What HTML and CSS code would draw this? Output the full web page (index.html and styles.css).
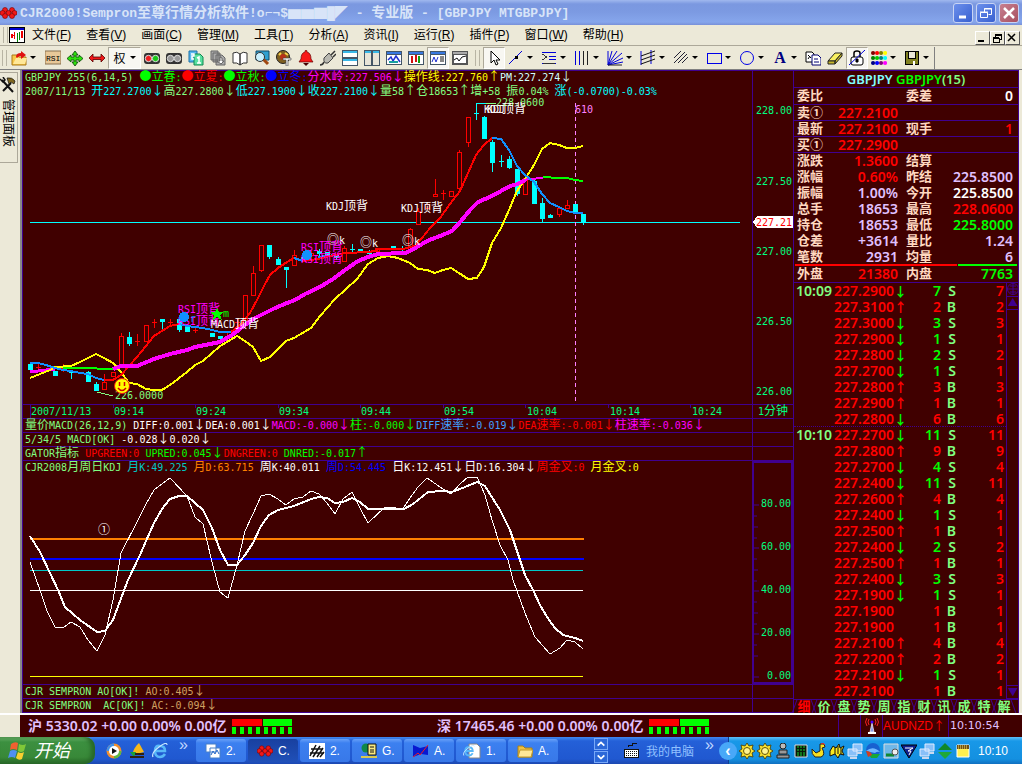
FILE: index.html
```html
<!DOCTYPE html>
<html lang="zh-CN">
<head>
    <meta charset="UTF-8">
    <meta name="viewport" content="width=device-width, initial-scale=1.0">
    <title>CJR2000 - GBPJPY</title>
    <link rel="stylesheet" href="styles.css">
</head>
<body>

    <!-- Title bar -->
    <header class="titlebar">
        <svg class="logo" width="17" height="16"><use href="#i-logo"/></svg>
        <h1>CJR2000!Sempron<i>至尊行情分析软件</i>!o⌐¬$▆▆▇█◤ - <i>专业版</i> - [GBPJPY MTGBPJPY]</h1>
        <div class="win-buttons">
            <button aria-label="Minimize"><svg width="18" height="18"><path d="M5 13h7" stroke="#fff" stroke-width="3"/></svg></button>
            <button aria-label="Restore"><svg width="18" height="18" fill="none" stroke="#fff"><path d="M7.500 8V4.500h7v6h-3M7 5h8" /><path d="M3.500 8.500h7v5h-7zM3 8h8"/></svg></button>
            <button class="close" aria-label="Close"><svg width="18" height="18"><path d="M4 4l10 10M14 4L4 14" stroke="#fff" stroke-width="2.500"/></svg></button>
        </div>
    </header>

    <!-- Menu -->
    <nav class="menubar">
        <span class="grip"></span>
        <svg class="mdi-icon" width="16" height="16" shape-rendering="crispEdges"><path d="M0 0h16v16H0z" fill="#000"/><path d="M1 3h14v12H1z" fill="#fff"/><path d="M1 1h14v2H1z" fill="#00c"/><path d="M2 7h2v4H2zM5 5h1v7H5zM12 4h2v7h-2zM3 8h3v1H3z" fill="#e00"/><path d="M8 6h1v9H8zM10 5h1v8h-1z" fill="#080"/></svg>
        <button>文件(<u>F</u>)</button>
        <button>查看(<u>V</u>)</button>
        <button>画面(<u>C</u>)</button>
        <button>管理(<u>M</u>)</button>
        <button>工具(<u>T</u>)</button>
        <button>分析(<u>A</u>)</button>
        <button>资讯(<u>I</u>)</button>
        <button>运行(<u>R</u>)</button>
        <button>插件(<u>P</u>)</button>
        <button>窗口(<u>W</u>)</button>
        <button>帮助(<u>H</u>)</button>
        <div class="mdi-buttons">
            <button aria-label="Minimize chart"><svg width="12" height="10"><path d="M2 8h6" stroke="#000" stroke-width="2"/></svg></button>
            <button aria-label="Restore chart"><svg width="12" height="10" fill="none" stroke="#000" shape-rendering="crispEdges"><path d="M4 4V1h6v5H8M4 2h6M2 5h6v4H2zM2 4h6"/></svg></button>
            <button aria-label="Close chart"><svg width="12" height="10"><path d="M2 1l7 7M9 1L2 8" stroke="#000" stroke-width="1.500"/></svg></button>
        </div>
    </nav>

    <!-- Toolbars -->
    <div class="toolbar">
        <span class="grip"></span>
        <button class="tool" aria-label="Open"><svg><path d="M1 5h5l2 2h7v8H1z" fill="#f8c848" stroke="#a87818"/><path d="M2 14l3-6h11l-2 6z" fill="#ffe898"/><path d="M5 7q0-4 5-4V1l5 4-5 4V6q-3 0-4 2z" fill="#e01010"/></svg></button>
        <button class="drop wide" aria-label="Open options"></button>
        <button class="tool" aria-label="RSI"><svg><path d="M0 1h16v13H0z" fill="#e8c898" stroke="#887050"/><text x="1" y="11" class="rsi">RSI</text></svg></button>
        <button class="tool" aria-label="Move"><svg><path d="M8 1l3 4H9v2h3V5l4 3.500-4 3.500v-2H9v2h2l-3 4-3-4h2v-2H4v2L0 8.500 4 5v2h3V5H5z" fill="#30e010" stroke="#084008" stroke-width=".8"/></svg></button>
        <button class="tool" aria-label="Width"><svg><path d="M0 8l4-4v3h8V4l4 4-4 4V9.500H4V12z" fill="#f01818" stroke="#500" stroke-width=".8"/></svg></button>
        <button class="rights on">权<span></span></button>
        <button class="tool" aria-label="Compare on"><svg><rect x="0" y="3" width="16" height="11" rx="3" fill="#333"/><circle cx="4.500" cy="8.500" r="3.200" fill="#f02020" stroke="#ddd"/><circle cx="11.500" cy="8.500" r="3.200" fill="#18c818" stroke="#ddd"/></svg></button>
        <button class="tool" aria-label="Compare off"><svg><rect x="0" y="3" width="16" height="11" rx="3" fill="#333"/><circle cx="4.500" cy="8.500" r="3.200" fill="#999" stroke="#ddd"/><circle cx="11.500" cy="8.500" r="3.200" fill="#999" stroke="#ddd"/></svg></button>
        <button class="tool" aria-label="Pages"><svg><path d="M1 1h8v11H1z" fill="#58b8f0" stroke="#1870a8"/><path d="M6 4h6l3 3v8H6z" fill="#58e0a0" stroke="#108850"/><path d="M3 4h3v2H4v3h2M9 8l2-1v6M9 13h4" fill="none" stroke="#fff" stroke-width="1.500"/></svg></button>
        <button class="tool" aria-label="Copy pages"><svg fill="#aaa" stroke="#666"><path d="M1 1h7v9H1zM3 3h7v9H3zM6 5h6l3 3v7H6z"/><path d="M10 7v4H7l4 3 3-3h-2V8z" fill="#fff"/></svg></button>
        <button class="tool" aria-label="Book"><svg><path d="M1 3q4-2 7 1 3-3 7-1v10q-4-1-7 2-3-3-7-2z" fill="#fff" stroke="#333"/><path d="M8 4v11" stroke="#333" stroke-width="1.500"/></svg></button>
        <button class="tool" aria-label="Find"><svg><path d="M2 1h13v9H2z" fill="#30a0d0" stroke="#104868"/><path d="M9 9l5 5" stroke="#a04810" stroke-width="3"/><circle cx="6" cy="7" r="4.500" fill="#c8f0ff" stroke="#333"/></svg></button>
        <button class="tool" aria-label="Build"><svg><circle cx="7" cy="7" r="6.500" fill="#806020" stroke="#222"/><circle cx="7" cy="7" r="3" fill="#b83018"/><path d="M3 5l2-2M9 3l3 2" stroke="#f8d048" stroke-width="2"/><path d="M7 8h8v2h-3v6h-2v-6H7z" fill="#eee" stroke="#444" stroke-width=".6"/></svg></button>
        <button class="tool" aria-label="Alarm"><svg><path d="M8 0q1 0 1 2 4 1 4 7l2 3H1l2-3q0-6 4-7 0-2 1-2z" fill="#f81818" stroke="#600" stroke-width=".7"/><path d="M5 13h6l-3 3z" fill="#400"/></svg></button>
        <button class="tool" aria-label="Connect"><svg><path d="M0 15q3 0 4-3M11 5l4-4M13 7l3-3" fill="none" stroke="#333" stroke-width="1.500"/><path d="M4 8l5-5 4 5-5 5q-5 1-4-5z" fill="#b8b8b0" stroke="#444"/></svg></button>
        <button class="tool" aria-label="Tile rows"><svg shape-rendering="crispEdges"><path d="M0 0h16v16H0z" fill="#456"/><path d="M1 3h14v4H1zM1 11h14v4H1z" fill="#fff"/><path d="M1 1h14v2H1zM1 9h14v2H1z" fill="#38b8e8"/></svg></button>
        <button class="tool" aria-label="Tile columns"><svg shape-rendering="crispEdges"><path d="M0 0h16v16H0z" fill="#456"/><path d="M1 3h6v12H1zM9 3h6v12H9z" fill="#e8e4d8"/><path d="M1 1h6v2H1zM9 1h6v2H9z" fill="#38b8e8"/></svg></button>
        <button class="tool" aria-label="Trend window"><svg><use href="#i-win"/><path d="M2 10l3-3 2 4 3-5 4 6" fill="none" stroke="#2030d0" stroke-width="1.500"/><path d="M3 12h9" stroke="#18a0a0" stroke-width="2"/></svg></button>
        <button class="tool" aria-label="Candle window"><svg><use href="#i-win"/><path d="M4 6v7M8 5v7" stroke="#d01010" stroke-width="2"/><path d="M11 6v7" stroke="#10a010" stroke-width="2"/></svg></button>
        <button class="tool on" aria-label="Quote window"><svg><use href="#i-win"/><path d="M2 12l2-5 2 5 2-5" fill="none" stroke="#2030d0"/><path d="M10 7h4M10 9h4M10 11h4" stroke="#111"/></svg></button>
        <button class="tool" aria-label="Line window"><svg><path d="M0 1h16v14H0z" fill="#555"/><path d="M1 2h14v2H1z" fill="#aaa"/><path d="M2 5h12v8H2z" fill="#fff"/><path d="M2 10l3-2 2 3 3-4 4-1" fill="none" stroke="#111"/></svg></button>

        <span class="grip second"></span>
        <button class="tool on" aria-label="Select"><svg><path d="M5 1v12l3-3 2 5 2-1-2-4h4z" fill="#fff" stroke="#000"/></svg></button>
        <button class="tool" aria-label="Line"><svg><path d="M1 14L14 1" stroke="#0000d8"/><path d="M7 6h3v3H7z" fill="#000"/></svg></button>
        <button class="drop" aria-label="Line options"></button>
        <button class="tool" aria-label="Levels"><svg shape-rendering="crispEdges"><path d="M1 2h14M8 6h7M8 9h7M1 13h14" stroke="#0000d8"/><path d="M1 4l5 3-5 3M2 13h12" fill="none" stroke="#333"/></svg></button>
        <button class="drop" aria-label="Level options"></button>
        <button class="tool" aria-label="Periods"><svg shape-rendering="crispEdges"><path d="M1 1v14M5 1v14" stroke="#0000d8"/><path d="M9 1v14M13 1v14" stroke="#222"/></svg></button>
        <button class="drop" aria-label="Period options"></button>
        <button class="tool" aria-label="Fan"><svg fill="none" stroke="#0000d8"><path d="M1 1v14M1 15L5 1M1 15L10 1M1 15L15 3M1 15l15-7M1 15l15-3"/><path d="M1 15h14" stroke="#222"/></svg></button>
        <button class="drop" aria-label="Fan options"></button>
        <button class="tool" aria-label="Channel"><svg fill="none" stroke="#111"><path d="M1 1v14M11 0v14" stroke="#0000d8"/><path d="M1 6l14-5M1 10l14-5M1 14l14-5"/></svg></button>
        <button class="drop" aria-label="Channel options"></button>
        <button class="tool" aria-label="Hatch"><svg fill="none" stroke="#223"><path d="M1 8l7-7M1 13L12 2M5 13l9-9M9 13l6-6"/></svg></button>
        <button class="drop" aria-label="Hatch options"></button>
        <button class="tool" aria-label="Rectangle"><svg shape-rendering="crispEdges"><path d="M1 3h14v10H1z" fill="none" stroke="#0000e8"/></svg></button>
        <button class="drop" aria-label="Rectangle options"></button>
        <button class="tool" aria-label="Ellipse"><svg><circle cx="8" cy="8" r="6.500" fill="none" stroke="#0000e8"/></svg></button>
        <button class="drop" aria-label="Ellipse options"></button>
        <button class="tool letter">A</button>
        <button class="drop" aria-label="Text options"></button>
        <button class="tool" aria-label="Duplicate"><svg fill="#fff" stroke="#000"><path d="M1 2h6l2 2v8H1z"/><path d="M3 5l3 3M3 9l2-3" fill="none"/><g stroke="#000070"><path d="M7 5h6l3 3v7H7z"/><path d="M9 9h4M9 12h5" /></g></svg></button>
        <button class="tool" aria-label="Erase"><svg><path d="M1 11l7-8h7l-7 8z" fill="#f8f060" stroke="#222"/><path d="M1 11h7v3H1zM8 11l7-8v3l-7 8z" fill="#c8b828" stroke="#222"/></svg></button>
        <button class="tool on" aria-label="Lock"><svg fill="none" stroke="#000"><path d="M5 7V3q0-2 3-2t3 2v4" stroke-width="1.500"/><rect x="2" y="7" width="12" height="8" rx="2" fill="#fff"/><path d="M7 9h2v3H7z" fill="#000"/><path d="M0 15L16 0" stroke="#0000d8"/></svg></button>
        <button class="tool" aria-label="Colours"><svg><g stroke-width="4" stroke-linecap="round"><path d="M2 3h.1" stroke="#800000"/><path d="M6 3h.1" stroke="#f00"/><path d="M10 3h.1" stroke="#808000"/><path d="M14 3h.1" stroke="#ff0"/><path d="M2 8h.1" stroke="#008000"/><path d="M6 8h.1" stroke="#0c0"/><path d="M10 8h.1" stroke="#008080"/><path d="M14 8h.1" stroke="#0ff"/><path d="M2 13h.1" stroke="#000080"/><path d="M6 13h.1" stroke="#00f"/><path d="M10 13h.1" stroke="#800080"/><path d="M14 13h.1" stroke="#f0f"/></g></svg></button>
        <button class="drop" aria-label="Colour options"></button>
        <button class="tool" aria-label="Save"><svg shape-rendering="crispEdges"><path d="M1 1h14v14H1z" fill="#000"/><path d="M2 2h2v7h8V2h2v12H2z" fill="#808020"/><path d="M5 2h6v6H5z" fill="#ece9d8"/><path d="M9 11h2v4H9z" fill="#fff"/></svg></button>
        <button class="drop" aria-label="Save options"></button>
        <span class="bar-end"></span>
    </div>

    <main class="desk">
        <aside class="dock">
            <button>
                <svg width="16" height="16"><path d="M2 3l11 12M3 14L11 6" stroke="#111" stroke-width="2"/><path d="M7 1q5-1 8 3l-1 3-3-2-2 2z" fill="#806820" stroke="#111" stroke-width=".7"/><path d="M0 2l3 3 2-2-2-3" fill="none" stroke="#111" stroke-width="1.500"/></svg>
                <span>管理面板</span>
            </button>
        </aside>

        <section class="charts">
            <!-- Price -->
            <div class="panel price">
                <div class="plot">
                    <p class="read"><span class="g">GBPJPY</span> <span class="g">255(6,14,5)</span> <i class="lime">●立春</i><span class="lime">:</span><i class="red">●立夏</i><span class="red">:</span><i class="lime">●立秋</i><span class="lime">:</span><i class="blue">●立冬</i><span class="blue">:</span><span class="mag"><i>分水岭</i>:227.506<i>↓</i></span><span class="yel"><i>操作线</i>:227.760<i>↑</i></span><span class="pale">PM:227.274<i>↓</i></span></p>
                    <p class="read"><span class="g">2007/11/13</span> <span class="cyan"><i>开</i>227.2700<i>↓</i></span><span class="g"><i>高</i>227.2800<i>↓</i></span><span class="cyan"><i>低</i>227.1900<i>↓</i><i>收</i>227.2100<i>↓</i></span><span class="g"><i>量</i>58<i>↑仓</i>18653<i>↑增</i>+58 <i>振</i>0.04%</span> <span class="cyan"><i>涨</i>(-0.0700)-0.03%</span></p>
                    <svg class="canvas" height="305" shape-rendering="crispEdges">
                        <g transform="translate(-23 -99)" fill="none">
                            <path d="M30 222.500H740" stroke="#0ff"/>
                            <path d="M575.500 103V402" stroke="#ff80ff" stroke-dasharray="4 3"/>
                            <g id="candles"></g>
                            <g stroke-width="2">
                                <path stroke="#0f0" d="M63 368L80 368 113 369"/>
                                <path stroke="#f0f" stroke-width="3" d="M30 372L46 370 55 369"/>
                                <path stroke="#ff0" d="M30 378L50 370 55 367 71 366 80 362 88 358 96 354 104 358 113 363 121 372 129 383 137 384 146 389 154 390 162 390 170 385 187 372 195 365 203 361 220 346 237 336 245 341 253 347 261 361 270 357 286 341 294 338 311 328 320 316 335 299 357 279 368 264 378 258 388 256 398 258 410 263 418 269 427 270 435 273 443 270 451 268 459 273 468 279 477 278 484 267 492 243 501 228 509 210 517 191 525 179 534 165 542 149 550 143 559 145 567 148 575 148 583 146"/>
                                <path stroke="#1090ff" d="M30 363L38 363 46 365 55 368 63 370 71 371 80 373 88 374 96 378 104 380"/>
                                <path stroke="#f00" d="M104 380L113 380 121 375 129 366 137 357 146 346 154 336 162 331 170 326 179 324"/>
                                <path stroke="#1090ff" d="M179 324L187 326 203 328 212 330 220 332 233 332"/>
                                <path stroke="#f00" d="M231 332L240 325 250 313 258 298 265 284 270 275 278 268 287 262 294 258"/>
                                <path stroke="#1090ff" d="M294 258L303 261M318 257L336 255"/>
                                <path stroke="#f00" d="M303 261L318 259 330 256 345 253 370 252 380 249 403 249 415 246 422 238 430 228 440 218 450 204 460 191 468 173 476 155 484 145 492 138"/>
                                <path stroke="#f0f" stroke-width="4" d="M113 369L121 366 137 366 154 359 170 354 187 350 195 347 220 342 232 335 245 325 255 318 275 308 287 303 295 300 305 294 320 287 333 279 345 270 358 261 368 257 378 254 405 253 412 250 427 241 440 236 452 231 461 221 470 210 478 202 492 196 510 186 518 184 525 180"/>
                                <path stroke="#f0f" d="M523 180L530 179 543 178"/>
                                <path stroke="#0f0" d="M543 177L558 178 567 178 575 180 583 181"/>
                                <path stroke="#1090ff" d="M492 138L501 139 509 150 517 166 525 175 534 182 542 194 550 203 559 207 567 211 575 213 583 213"/>
                            </g>
                            <path d="M476.500 113V103.500H486" stroke="#0ff"/>
                            <path d="M486 103.500H496M97 392L113 396" stroke="#80ff80"/>
                            <g class="marks">
                                <text x="496" y="106" fill="#80ff80">228.0600</text>
                                <text x="484" y="113">KDJ<tspan class="full">顶背</tspan></text>
                                <text x="487" y="113">KDJ</text>
                                <text x="575" y="113" fill="#ff80ff">610</text>
                                <text x="326" y="210">KDJ<tspan class="full">顶背</tspan></text>
                                <text x="401" y="212">KDJ<tspan class="full">顶背</tspan></text>
                                <text x="327" y="244"><tspan class="full">◎</tspan>k</text>
                                <text x="360" y="247"><tspan class="full">◎</tspan>k</text>
                                <text x="402" y="245"><tspan class="full">◎</tspan>k</text>
                                <text x="301" y="251" fill="#f0f">RSI<tspan class="full">顶背</tspan></text>
                                <text x="301" y="263" fill="#f0f">RSI<tspan class="full">顶背</tspan></text>
                                <text x="178" y="313" fill="#f0f">RSI<tspan class="full">顶背</tspan></text>
                                <text x="178" y="325" fill="#f0f">RSI<tspan class="full">顶背</tspan></text>
                                <text x="190" y="322" fill="#1090ff">r</text>
                                <text x="211" y="328">MACD<tspan class="full">顶背</tspan></text>
                                <text x="223" y="317" fill="#0f0">m</text>
                                <text x="115" y="399" fill="#80ff80">226.0000</text>
                            </g>
                            <circle cx="307" cy="255" r="5" fill="#1090ff"/>
                            <circle cx="184" cy="317" r="5" fill="#1090ff"/>
                            <path d="M217 308l2 4h5l-4 3 2 5-5-3-4 3 1-5-4-3h5z" fill="#0f0"/>
                            <g shape-rendering="auto">
                                <circle cx="122" cy="386" r="7.500" fill="#ff0" stroke="#f01010"/>
                                <path d="M119.500 382v4M124.500 382v4M118 388q4 5 8 0" stroke="#d00000" stroke-width="1.500"/>
                            </g>
                        </g>
                    </svg>
                </div>
                <svg class="scale marks" shape-rendering="crispEdges">
                    <g fill="#00ff80"><text x="3" y="43">228.00</text><text x="3" y="114">227.50</text><text x="3" y="184">227.00</text><text x="3" y="254">226.50</text><text x="3" y="324">226.00</text></g>
                    <path d="M0 151l4-6h36v12H4z" fill="#fff"/>
                    <text x="3" y="155" fill="#f00">227.21</text>
                </svg>
            </div>
            <div class="panel">
                <svg class="plot times marks" height="13" fill="#00ff80">
                    <text x="8" y="10">2007/11/13</text><text x="91" y="10">09:14</text><text x="173" y="10">09:24</text><text x="256" y="10">09:34</text><text x="338" y="10">09:44</text><text x="421" y="10">09:54</text><text x="504" y="10">10:04</text><text x="587" y="10">10:14</text><text x="669" y="10">10:24</text>
                    <path d="M7.500 0v13M90.500 0v3M172.500 0v3M255.500 0v3M337.500 0v3M420.500 0v3M502.500 0v3M585.500 0v3M667.500 0v3" stroke="#400090"/>
                </svg>
                <p class="scale read period">1<i>分钟</i></p>
            </div>

            <!-- Indicators -->
            <div class="panel">
                <p class="plot read"><span class="g"><i>量价</i>MACD(26,12,9)</span> DIFF:0.001<i>↓</i>DEA:0.001<i>↓</i><span class="mag">MACD:-0.000<i>↓</i></span><span class="lime"><i>柱</i>:-0.000<i>↓</i></span><span class="sky">DIFF<i>速率</i>:-0.019<i>↓</i></span><span class="red">DEA<i>速率</i>:-0.001<i>↓</i></span><span class="mag"><i>柱速率</i>:-0.036<i>↓</i></span></p>
                <div class="scale"></div>
            </div>
            <div class="panel">
                <p class="plot read"><span class="g">5/34/5 MACD[OK]</span> -0.028<i>↓</i>0.020<i>↓</i></p>
                <div class="scale"></div>
            </div>
            <div class="panel">
                <p class="plot read"><span class="g">GATOR<i>指标</i></span> <span class="red">UPGREEN:0</span> <span class="lime">UPRED:0.045<i>↓</i></span><span class="red">DNGREEN:0</span> <span class="lime">DNRED:-0.017<i>↑</i></span></p>
                <div class="scale"></div>
            </div>
            <div class="panel kdj">
                <div class="plot">
                    <p class="read"><span class="g">CJR2008<i>月周日</i>KDJ</span> <span class="teal"><i>月</i>K:49.225</span> <span class="orange"><i>月</i>D:63.715</span> <i>周</i>K:40.011 <span class="blue"><i>周</i>D:54.445</span> <i>日</i>K:12.451<i>↓日</i>D:16.304<i>↓</i><span class="red"><i>周金叉</i>:0</span> <span class="yel"><i>月金叉</i>:0</span></p>
                    <svg class="canvas" height="209" shape-rendering="crispEdges">
                        <g transform="translate(-23 -475)" fill="none">
                            <path d="M30 539H584" stroke="#ff8000" stroke-width="2"/>
                            <path d="M30 559H584" stroke="#00f" stroke-width="2"/>
                            <path d="M30 570.500H583" stroke="#00c8c8"/>
                            <path d="M30 590.500H583" stroke="#fff"/>
                            <path d="M30 676.500H583" stroke="#ff0"/>
                            <path stroke="#fff" d="M30 562L40 590 47 611 55 627 63 628 71 622 80 627 88 640 97 651 105 635 113 600 121 553 137 522 146 504 154 490 170 478 187 496 195 517 203 524 212 562 220 592 228 598 237 565 245 531 253 514 261 496 269 494 278 499 286 505 294 499 303 497 311 491 319 494 327 503 335 514 343 499 352 492 360 508 368 523 385 507 393 507 402 510 410 498 418 487 427 478 443 489 451 494 460 484 468 477 477 477 485 495 492 520 500 545 508 560 513 580 525 613 535 637 550 654 560 648 567 640 575 642 583 649"/>
                            <path stroke="#fff" stroke-width="2" d="M30 536L40 552 50 573 58 590 65 607 80 620 97 632 105 631 113 620 128 580 140 555 146 541 154 523 162 509 170 499 179 496 187 496 195 503 203 510 212 528 220 550 228 565 237 565 245 555 253 543 261 526 269 515 278 510 294 506 311 499 319 497 327 498 335 503 343 502 352 498 360 502 368 509 404 509 413 504 428 492 443 491 452 492 465 487 477 482 485 486 500 510 510 530 517 551 525 575 533 590 540 605 547 617 555 628 563 635 575 638 583 641"/>
                            <g class="marks"><text x="98" y="534"><tspan class="full">①</tspan></text></g>
                        </g>
                    </svg>
                </div>
                <svg class="scale marks" fill="#00ff80">
                    <path d="M0 42h5M0 53h3M0 64h4M0 75h3M0 85h5M0 96h3M0 107h4M0 118h3M0 128h5M0 139h3M0 150h4M0 161h3M0 171h5M0 182h3M0 193h4M0 214h5" stroke="#400090"/>
                    <text x="7" y="44">80.00</text><text x="7" y="87">60.00</text><text x="7" y="130">40.00</text><text x="7" y="173">20.00</text><text x="13" y="216">0.00</text>
                </svg>
            </div>
            <div class="panel">
                <p class="plot read"><span class="g">CJR SEMPRON AO[OK]!</span> <span class="tan">AO:0.405<i>↓</i></span></p>
                <div class="scale"></div>
            </div>
            <div class="panel">
                <p class="plot read"><span class="g">CJR SEMPRON&nbsp; AC[OK]!</span> <span class="tan">AC:-0.094<i>↓</i></span></p>
                <div class="scale"></div>
            </div>
        </section>

        <!-- Quote board -->
        <section class="quote">
            <h2><span class="aqua">GBPJPY</span> <span class="lime">GBPJPY</span>(15)</h2>
            <table class="board">
                <tr class="line"><th>委比</th><td></td><th>委差</th><td class="white">0</td></tr>
                <tr class="line"><th>卖①</th><td class="red">227.2100</td><th></th><td></td></tr>
                <tr class="line"><th>最新</th><td class="red">227.2100</td><th>现手</th><td class="red">1</td></tr>
                <tr class="line"><th>买①</th><td class="red">227.2900</td><th></th><td></td></tr>
                <tr><th>涨跌</th><td class="red">1.3600</td><th>结算</th><td></td></tr>
                <tr><th>涨幅</th><td class="red">0.60%</td><th>昨结</th><td>225.8500</td></tr>
                <tr><th>振幅</th><td>1.00%</td><th>今开</th><td class="white">225.8500</td></tr>
                <tr><th>总手</th><td>18653</td><th>最高</th><td class="red">228.0600</td></tr>
                <tr><th>持仓</th><td>18653</td><th>最低</th><td class="lime">225.8000</td></tr>
                <tr><th>仓差</th><td>+3614</td><th>量比</th><td>1.24</td></tr>
                <tr><th>笔数</th><td>2931</td><th>均量</th><td>6</td></tr>
            </table>
            <div class="ratio"><span style="flex-grow: 21380"></span><span style="flex-grow: 7763"></span></div>
            <table class="board last">
                <tr class="line"><th>外盘</th><td class="red">21380</td><th>内盘</th><td class="lime">7763</td></tr>
            </table>
            <div class="tape">
                <table class="ticks"><tbody id="ticks"></tbody></table>
                <div class="scroll">
                    <svg width="12" height="13" fill="none" stroke="#400090"><circle cx="6" cy="6" r="5.500"/><path d="M6 0v12M0 6h12M3 3h6M3 9h6"/></svg>
                    <button aria-label="Scroll up">▲</button>
                    <button class="down" aria-label="Scroll down">▼</button>
                </div>
            </div>
            <nav class="tabs">
                <button class="active">细</button><button>价</button><button>盘</button><button>势</button><button>周</button><button>指</button><button>财</button><button>讯</button><button>成</button><button>特</button><button>解</button>
            </nav>
        </section>
    </main>

    <!-- Market status -->
    <div class="status">
        <div class="index">沪 5330.02 +0.00 0.00% 0.00亿 <span class="meter"></span></div>
        <div class="index">深 17465.46 +0.00 0.00% 0.00亿 <span class="meter"></span></div>
        <div class="cell"></div>
        <div class="cell"><svg width="14" height="18" fill="none"><path d="M5 15l2-9 2 9z" fill="#8898e8" stroke="#fff" stroke-width=".7"/><path d="M3 16h8" stroke="#fff" stroke-width="2"/><circle cx="7" cy="5" r="1.500" fill="#40f"/><path d="M4 2q-2 3 0 6M10 2q2 3 0 6M2 1q-3 4 0 8M12 1q3 4 0 8" stroke="#f02020"/></svg></div>
        <div class="cell pair">AUDNZD<i>↑</i></div>
        <div class="cell clock">10:10:54</div>
    </div>

    <!-- Taskbar -->
    <footer class="taskbar">
        <button class="start">
            <svg width="20" height="19"><path d="M3 3q4-3 7-1L9 9Q5 7 2 9z" fill="#f06030"/><path d="M11 3q4 2 7 0l-2 7q-3 2-6 0z" fill="#80c838"/><path d="M2 10q3-2 7 0l-2 7q-3-2-7 0z" fill="#5090f0"/><path d="M10 11q3 2 6 0l-2 7q-3 2-6-1z" fill="#f8d030"/></svg>
            开始
        </button>
        <div class="launch">
            <a href="#" aria-label="Media player"><svg><circle cx="8" cy="8" r="7.500" fill="#f09030"/><path d="M8 .5a7.500 7.500 0 0 0-7.500 7.500H8z" fill="#4090e8"/><path d="M8 15.500A7.500 7.500 0 0 0 15.500 8H8z" fill="#60b840"/><circle cx="8" cy="8" r="5" fill="#fff"/><path d="M6 5l5 3-5 3z" fill="#111"/></svg></a>
            <a href="#" aria-label="Sail"><svg><path d="M10 0l5 9-12 3q2-8 7-12z" fill="#f8b818"/><path d="M1 9h6l-2 5z" fill="#18a038"/><path d="M1 14h14M6 11h9" stroke="#302010" stroke-width="2"/></svg></a>
            <a href="#" aria-label="Internet Explorer"><svg><use href="#i-ie"/></svg></a>
        </div>
        <span class="more">»</span>
        <div class="tasks">
            <button><svg><path d="M1 1h10v8H1zM5 5h10v10H5z" fill="#fff" stroke="#4880c8"/><path d="M6 12l2-4 2 3 2-4 2 4" fill="none" stroke="#2868c8"/></svg>2.</button>
            <button class="current"><svg><use href="#i-logo"/></svg>C.</button>
            <button><svg><path d="M0 0h16v16H0z" fill="#fff"/><path d="M1 13L7 2M4 14l7-11M8 14l6-9M2 6h11M1 10h14M11 14l4-5" stroke="#111" stroke-width="1.500"/></svg>2.</button>
            <button><svg><circle cx="5" cy="5" r="4.500" fill="#108848"/><path d="M7 1h8v11H7z" fill="#f8e880" stroke="#111"/><path d="M9 4h4M9 7h4M9 9h4" stroke="#111"/><path d="M0 14h16" stroke="#d8c850" stroke-width="2"/></svg>G.</button>
            <button><svg><path d="M0 2l7 3 8-2v9l-7-1-8 3z" fill="#0818d0"/><path d="M0 14l5-4 2 2 8-10" fill="none" stroke="#f02020"/></svg>A.</button>
            <button><svg><path d="M4 1h8l3 3v11H4z" fill="#fff" stroke="#888"/></svg><svg class="badge" viewBox="0 0 16 16"><use href="#i-ie"/></svg>1.</button>
            <button><svg><path d="M1 3h5l2 2h7v9H1z" fill="#f0c040" stroke="#a88018"/><path d="M1 14l2-7h13l-2 7z" fill="#ffe898" stroke="#c09828"/></svg>A.</button>
        </div>
        <div class="spin"><button aria-label="Previous tasks"><svg viewBox="0 0 12 12"><path d="M2 8l4-4 4 4" fill="none" stroke="#fff" stroke-width="2"/></svg></button><button aria-label="Next tasks"><svg viewBox="0 0 12 12"><path d="M2 4l4 4 4-4" fill="none" stroke="#fff" stroke-width="2"/></svg></button></div>
        <svg class="keyboard" shape-rendering="crispEdges"><path d="M5 4V2h4V0h5" fill="none" stroke="#111"/><path d="M1 6h14v8H1z" fill="#fff" stroke="#111"/><path d="M3 8h11M3 10h11M3 12h11" stroke="#111" stroke-dasharray="1 1"/></svg>
        <span class="computer">我的电脑</span>
        <span class="more">»</span>
        <div class="tray">
            <button aria-label="Hide icons">‹</button>
            <svg><use href="#i-sun"/></svg>
            <svg><use href="#i-sun"/></svg>
            <svg><circle cx="8" cy="3" r="3" fill="#bbb" stroke="#222"/><path d="M4 7h8v4H4zM2 12h12v3H2z" fill="#999" stroke="#222"/></svg>
            <svg><path d="M2 2h12v12H2z" fill="#081808" stroke="#ddd"/><path d="M4 4h8M4 7h8M4 10h8M4 12h8" stroke="#18d030" stroke-dasharray="2 1"/></svg>
            <svg><path d="M9 1h4l1 3-3 1q4 7-1 9H4q-4-3-3-8l4 4 4-2z" fill="#f8e020" stroke="#222"/><path d="M10 1l2-1 2 2" stroke="#f02020" fill="none"/></svg>
            <svg><path d="M1 8l3-5 3 2 3-4 1 4 4-2-2 5 2 4-4-1-2 4-3-4-5 2z" fill="#f8e820" stroke="#111"/><path d="M6 4v7M9 3v8M12 5v6" stroke="#111"/></svg>
            <svg><use href="#i-net"/></svg>
            <svg><circle cx="8" cy="7" r="7" fill="#1860d0"/><path d="M1 8q7-6 14 1-3-1-5 1z" fill="#70b8ff"/><path d="M4 11h11l-3 4H6z" fill="#18a838"/><path d="M1 8q5 0 6 4l-4 2z" fill="#d04020"/></svg>
            <svg><path d="M1 1h14v14H1z" fill="#70b8e8" stroke="#ddd"/><path d="M3 12h8" stroke="#108830" stroke-width="3"/><circle cx="12" cy="9" r="3" fill="#eee" stroke="#555"/></svg>
            <svg><path d="M0 2h16l-8 13z" fill="#102090" stroke="#000"/><path d="M4 5h8l-5 3h3l-2 4" fill="none" stroke="#fff"/></svg>
            <svg><use href="#i-net"/></svg>
            <svg><path d="M8 0l7 7H1z" fill="#108828"/><path d="M1 9h14l-7 7z" fill="#20a838"/></svg>
            <svg><path d="M2 2h12v12H2z" fill="#fff050" stroke="#fff"/><path d="M2 2h12v4H2z" fill="#705010"/><path d="M3 3h10M3 5h10" stroke="#f8e070" stroke-dasharray="1 1"/></svg>
            <time>10:10</time>
        </div>
    </footer>

    <!-- Shared icons -->
    <svg class="defs" width="0" height="0">
        <symbol id="i-logo" viewBox="0 0 17 16"><g fill="#f01818" stroke="#700" stroke-width=".6"><circle cx="5" cy="5" r="2.500"/><circle cx="12" cy="5" r="2.500"/><circle cx="2.500" cy="8" r="2.500"/><circle cx="8.500" cy="8" r="2.500"/><circle cx="14.500" cy="8" r="2.500"/><circle cx="5" cy="11" r="2.500"/><circle cx="12" cy="11" r="2.500"/></g></symbol>
        <symbol id="i-win" viewBox="0 0 16 16"><path d="M0 1h16v14H0z" fill="#456"/><path d="M1 2h14v2H1z" fill="#3878e0"/><path d="M1 5h14v9H1z" fill="#fff"/></symbol>
        <symbol id="i-ie" viewBox="0 0 16 16"><path d="M13 11q-2 3-5 3-5 0-5-6t5-5q5 0 5 5H4" fill="none" stroke="#58b8f8" stroke-width="2.500"/><path d="M1 14Q-1 10 7 4t8-2" fill="none" stroke="#c8e8ff" stroke-width="1.200"/></symbol>
        <symbol id="i-sun" viewBox="0 0 16 16"><path d="M8 0l2 3 4-1-1 4 3 2-3 2 1 4-4-1-2 3-2-3-4 1 1-4-3-2 3-2-1-4 4 1z" fill="#f8e030" stroke="#443800" stroke-width=".8"/><circle cx="8" cy="8" r="3.500" fill="#fff490" stroke="#665500"/></symbol>
        <symbol id="i-net" viewBox="0 0 16 16"><path d="M6 1h9v7H6zM1 6h9v7H1z" fill="#88c0f8" stroke="#e0ecff"/><path d="M3 15h7M10 10h5" stroke="#c8d8f0" stroke-width="2"/></symbol>
    </svg>

    <script>
        // Candles: x, body top, body bottom, high, low, direction (u = up, d = down)
        const candles = [
            [30, 364, 370, 364, 370, "d"], [38, 367, 368, 363, 371, "u"], [55, 371, 376, 371, 376, "d"],
            [63, 368, 369, 364, 372, "u"], [71, 371, 373, 371, 379, "d"], [88, 372, 382, 371, 382, "d"],
            [96, 384, 391, 382, 391, "d"], [104, 382, 390, 374, 390, "u"], [113, 372, 377, 372, 377, "u"],
            [121, 336, 366, 333, 366, "u"], [129, 337, 344, 332, 346, "d"], [137, 341, 342, 334, 346, "u"],
            [146, 325, 342, 325, 342, "u"], [154, 322, 323, 319, 328, "u"], [162, 319, 322, 319, 329, "d"],
            [170, 322, 323, 319, 327, "u"], [179, 319, 330, 319, 332, "d"], [187, 326, 332, 326, 332, "d"],
            [195, 330, 331, 327, 333, "u"], [212, 333, 337, 333, 337, "d"], [220, 336, 339, 336, 339, "d"],
            [229, 332, 338, 332, 338, "u"], [237, 322, 323, 319, 326, "u"], [245, 295, 325, 295, 325, "u"],
            [253, 273, 296, 266, 296, "u"], [261, 245, 271, 245, 272, "u"], [269, 245, 257, 245, 259, "d"],
            [278, 259, 265, 257, 265, "d"], [286, 267, 270, 267, 288, "d"], [294, 255, 266, 250, 266, "u"],
            [303, 257, 260, 257, 260, "d"], [311, 253, 256, 251, 260, "u"], [319, 251, 254, 249, 257, "d"],
            [327, 252, 255, 252, 258, "d"], [336, 255, 258, 255, 260, "d"], [344, 248, 262, 246, 262, "u"],
            [352, 249, 250, 244, 252, "d"], [360, 249, 252, 249, 253, "d"], [369, 253, 254, 250, 256, "d"],
            [377, 248, 252, 248, 252, "u"], [385, 248, 250, 248, 250, "d"], [393, 246, 249, 246, 249, "d"],
            [402, 248, 249, 246, 251, "d"], [410, 229, 247, 228, 247, "u"], [418, 211, 225, 208, 225, "u"],
            [427, 204, 209, 204, 209, "u"], [435, 194, 197, 179, 197, "u"], [443, 193, 194, 190, 200, "u"],
            [451, 191, 197, 191, 197, "u"], [459, 152, 189, 150, 193, "u"], [468, 117, 143, 117, 147, "u"],
            [476, 113, 114, 103, 120, "d"], [484, 117, 139, 116, 139, "d"], [492, 142, 163, 140, 172, "d"],
            [501, 161, 162, 155, 167, "d"], [509, 159, 168, 156, 169, "d"], [517, 169, 194, 169, 196, "d"],
            [525, 178, 195, 178, 195, "u"], [534, 181, 204, 179, 204, "d"], [542, 203, 219, 198, 222, "d"],
            [550, 215, 218, 214, 218, "d"], [559, 208, 215, 207, 217, "u"], [567, 205, 209, 200, 209, "u"],
            [575, 204, 212, 204, 212, "d"], [583, 214, 223, 214, 225, "d"]
        ];

        document.getElementById("candles").innerHTML = candles.map(([x, top, bottom, high, low, dir]) => {
            const color = dir === "u" ? "#f00" : "#0ff";
            const fill = dir === "u" ? "#400000" : color;
            return `<path d="M${x + 0.5} ${high}V${low}" stroke="${color}"/>` +
                `<rect x="${x - 1.5}" y="${top + 0.5}" width="4" height="${Math.max(bottom - top - 1, 0.1)}" fill="${fill}" stroke="${color}"/>`;
        }).join("");

        // Ticks: time, price, direction, volume, side
        const ticks = [
            ["10:09", "227.2900", "↓", 7, "S"], ["", "227.3100", "↑", 2, "B"], ["", "227.3000", "↓", 3, "S"],
            ["", "227.2900", "↓", 1, "S"], ["", "227.2800", "↓", 2, "S"], ["", "227.2700", "↓", 1, "S"],
            ["", "227.2800", "↑", 3, "B"], ["", "227.2900", "↑", 1, "B"], ["", "227.2800", "↓", 6, "B"],
            ["10:10", "227.2700", "↓", 11, "S"], ["", "227.2800", "↑", 9, "B"], ["", "227.2700", "↓", 4, "S"],
            ["", "227.2400", "↓", 11, "S"], ["", "227.2600", "↑", 4, "B"], ["", "227.2400", "↓", 1, "S"],
            ["", "227.2500", "↑", 1, "B"], ["", "227.2400", "↓", 2, "S"], ["", "227.2500", "↑", 1, "B"],
            ["", "227.2400", "↓", 3, "S"], ["", "227.1900", "↓", 1, "S"], ["", "227.1900", "", 1, "B"],
            ["", "227.1900", "", 1, "B"], ["", "227.2100", "↑", 4, "B"], ["", "227.2200", "↑", 2, "B"],
            ["", "227.2100", "↓", 1, "S"], ["", "227.2100", "", 1, "B"]
        ];

        document.getElementById("ticks").innerHTML = ticks.map(([time, price, arrow, vol, side], n) =>
            `<tr class="${time && n ? "minute" : ""}"><td class="time">${time}</td><td class="px">${price}</td>` +
            `<td class="arrow ${arrow === "↓" ? "lime" : ""}">${arrow}</td>` +
            `<td class="vol ${side === "S" ? "lime" : ""}">${vol}</td><td class="side">${side}</td><td>${vol}</td></tr>`
        ).join("");
    </script>
</body>
</html>
```

FILE: styles.css
```css
* {
    box-sizing: border-box;
}

body {
    margin: 0;
    min-height: 100vh;
    display: flex;
    flex-direction: column;
    background-color: #ece9d8;
    font-family: "Liberation Sans", "Noto Sans CJK SC", sans-serif;
    font-size: 12px;
    color: #000;
}

h1, h2, p {
    margin: 0;
    font-size: inherit;
}

button {
    margin: 0;
    padding: 0;
    border: 0;
    background: none;
    font: inherit;
    color: inherit;
}

i {
    font-style: normal;
}

svg {
    display: block;
    flex: none;
}

.defs {
    position: absolute;
}

/* Title bar */
.titlebar {
    display: flex;
    align-items: center;
    height: 25px;
    padding: 0 3px 0 0;
    background: linear-gradient(#a0b8ee, #7b98e0 4px, #7c9ae2 12px, #86a6ec 22px, #7890d8);
    color: #d8e4f8;
}

.titlebar h1 {
    flex: 1;
    padding-left: 3px;
    font: bold 13px/20px "Liberation Mono", "Noto Sans CJK SC", monospace;
    white-space: pre;
}

.titlebar h1 i {
    font: bold 14px/20px "Noto Sans CJK SC", sans-serif;
}

.win-buttons {
    display: flex;
    gap: 3px;
}

.win-buttons button {
    width: 20px;
    height: 20px;
    border: 1px solid #c8d4f4;
    border-radius: 3px;
    background: linear-gradient(135deg, #6c90ec, #3860d0);
}

.win-buttons .close {
    background: linear-gradient(135deg, #c88090, #a85060);
}

/* Menu */
.menubar {
    display: flex;
    align-items: center;
    gap: 15px;
    height: 20px;
    padding: 0 2px 0 3px;
    font-size: 12px;
    line-height: 18px;
}

.grip {
    width: 5px;
    height: 16px;
    border: solid #b8b4a4;
    border-width: 0 1px;
}

.mdi-icon {
    margin: 0 -8px 0 -14px;
}

.mdi-buttons {
    display: flex;
    margin: 5px 0 0 auto;
}

.mdi-buttons button {
    width: 15px;
    height: 14px;
    border: 1px solid;
    border-color: #fff #555 #555 #fff;
}

/* Toolbars */
.toolbar {
    display: flex;
    align-items: center;
    height: 25px;
    padding-left: 2px;
    border-top: 1px solid #aca899;
    border-bottom: 1px solid #808080;
}

.toolbar .grip {
    margin-right: 1px;
}

.toolbar .second {
    margin: 0 3px 0 4px;
}

.tool {
    display: grid;
    place-items: center;
    flex: none;
    width: 22px;
    height: 22px;
}

.tool svg {
    width: 16px;
    height: 16px;
}

.on {
    background-color: #f8f7f2;
    border: 1px solid;
    border-color: #aca899 #fff #fff #aca899;
}

.letter {
    font: bold 16px/22px "Liberation Serif", serif;
    color: #000080;
}

.rsi {
    font: 8px "Liberation Mono", monospace;
}

.drop {
    display: grid;
    place-items: center start;
    width: 11px;
    height: 22px;
}

.wide {
    width: 12px;
}

.drop::before,
.rights span {
    content: "";
    border: 3px solid transparent;
    border-top: 3px solid #000;
    border-bottom: 0;
}

.rights {
    display: flex;
    align-items: center;
    justify-content: center;
    gap: 4px;
    width: 33px;
    height: 22px;
}

.bar-end {
    width: 1px;
    height: 22px;
    background-color: #808080;
}

/* Work area */
.desk {
    flex: 1;
    display: flex;
    padding-right: 3px;
    border-bottom: 2px solid #fff;
}

.dock {
    width: 22px;
    border-right: 2px solid #888;
}

.dock button {
    display: flex;
    flex-direction: column;
    align-items: center;
    gap: 6px;
    width: 18px;
    margin-top: 2px;
    padding: 4px 2px 15px 0;
    border: 1px solid #aca899;
    border-left: 0;
}

.dock span {
    writing-mode: vertical-rl;
    text-orientation: sideways;
    line-height: 15px;
}

.charts {
    flex: 1;
    min-width: 0;
    display: flex;
    flex-direction: column;
    background-color: #400000;
    border: solid #400090;
    border-width: 1px 0 0 1px;
    color: #fff;
}

.panel {
    display: flex;
    border-bottom: 1px solid #400090;
}

.plot {
    flex: 1;
    min-width: 0;
}

.canvas {
    width: 100%;
    overflow: visible;
}

.scale {
    flex: none;
    width: 41px;
    border-left: 1px solid #400090;
}

.price {
    height: 334px;
}

.price .scale {
    height: 333px;
}

.kdj {
    flex: 1;
}

.kdj .scale {
    height: auto;
    border: 2px solid #400090;
}

.times {
    height: 13px;
}

.read {
    height: 13px;
    padding-left: 2px;
    font: 10px/13px "DejaVu Sans Mono", "Noto Sans CJK SC", monospace;
    white-space: pre;
}

/* full-width characters sit on the 10px baseline without growing the row */
.read i,
.pair i {
    font: 12px/0 "Noto Sans CJK SC", sans-serif;
}

.price .read,
.kdj .read {
    height: 14px;
}

.period {
    padding-left: 5px;
    color: #00ff80;
}

.marks text {
    font: 10px "DejaVu Sans Mono", "Noto Sans CJK SC", monospace;
}

.canvas .marks {
    fill: #fff;
}

.marks .full {
    font: 12px "Noto Sans CJK SC", sans-serif;
}

.g { color: #80ff80; }
.lime { color: #00ff00; }
.red { color: #ff0000; }
.blue { color: #0000ff; }
.mag { color: #ff00ff; }
.yel { color: #ffff00; }
.cyan { color: #00ffff; }
.pale { color: #d0ffff; }
.sky { color: #40a0ff; }
.teal { color: #00c8c8; }
.orange { color: #ff8000; }
.tan { color: #d0a060; }
.aqua { color: #80ffff; }

/* Quote board */
.quote {
    flex: none;
    width: 226px;
    display: flex;
    flex-direction: column;
    background-color: #400000;
    border: 1px solid #400090;
    border-bottom: 0;
    font-family: "Noto Sans", "Noto Sans CJK SC", sans-serif;
    font-size: 14px;
    font-weight: 600;
    line-height: 15px;
    color: #e0c0ff;
}

.quote h2 {
    height: 17px;
    border-bottom: 1px solid #400090;
    font-weight: 600;
    font-size: 13px;
    line-height: 16px;
    text-align: center;
    color: #80ff80;
}

.board,
.ticks {
    width: 100%;
    border-collapse: collapse;
    table-layout: fixed;
}

.board th {
    width: 42px;
    padding: 0 0 0 3px;
    font-size: 13px;
    line-height: 15px;
    text-align: left;
    color: #ffd8c0;
}

.board td {
    padding: 0 5px 0 0;
    height: 16px;
    line-height: 15px;
    text-align: right;
}

.board td:nth-child(2) {
    width: 67px;
}

.board .line {
    border-bottom: 1px solid #400090;
}

.board .white {
    color: #fff;
}

.board .red {
    color: #ff0000;
}

.board .lime {
    color: #00ff00;
}

.ratio {
    display: flex;
    gap: 1px;
    height: 2px;
    margin: 0 1px;
}

.ratio span {
    flex-basis: 0;
    background-color: #00ff00;
}

.ratio span:first-child {
    background-color: #ff0000;
}

.tape {
    flex: 1;
    display: flex;
    align-items: stretch;
}

.ticks {
    flex: 1;
    align-self: start;
    color: #ff0000;
}

.ticks td {
    width: 48px;
    height: 16px;
    padding: 0 2px 0 0;
    line-height: 15px;
    text-align: right;
}

.ticks .time {
    width: 38px;
    padding: 0;
    color: #80ff80;
}

.ticks .px {
    width: 62px;
    padding: 0;
}

.ticks .arrow {
    width: 13px;
    padding: 0;
    text-align: center;
    font: bold 13px/15px "Noto Sans CJK SC", sans-serif;
}

.ticks .vol {
    width: 36px;
}

.ticks .side {
    width: 15px;
    color: #80ff80;
}

.ticks .lime {
    color: #00ff00;
}

.ticks .minute {
    border-top: 1px dotted #400090;
}

.scroll {
    display: flex;
    flex-direction: column;
    width: 13px;
    border-left: 1px solid #400090;
    color: #400090;
}

.scroll button {
    height: 14px;
    border: solid #400090;
    border-width: 1px 0;
    font-size: 10px;
    line-height: 11px;
}

.scroll .down {
    margin-top: auto;
}

.tabs {
    display: flex;
    height: 14px;
    border-top: 1px solid #400090;
}

.tabs button {
    display: flex;
    justify-content: space-between;
    width: 20px;
    height: 13px;
    font-size: 13px;
    font-weight: bold;
    line-height: 12px;
    color: #80ff80;
}

.tabs button::before {
    content: "";
    width: 1px;
    height: 13px;
    background-color: #400090;
    transform: skewX(-20deg);
}

.tabs button::after {
    content: "";
    width: 1px;
    height: 13px;
    background-color: #400090;
    transform: skewX(20deg);
}

.tabs .active {
    color: #ff0000;
}

/* Market status */
.status {
    display: grid;
    grid-template-columns: 1fr 1fr 22px 22px 66px 74px;
    height: 22px;
    margin-left: 20px;
    background-color: #400000;
    font-family: "DejaVu Sans", "Noto Sans CJK SC", sans-serif;
    font-size: 13px;
    line-height: 20px;
    color: #e0c0ff;
}

.index {
    display: flex;
    align-items: center;
    gap: 6px;
    padding-left: 8px;
    font-family: "Noto Sans", "Noto Sans CJK SC", sans-serif;
    font-size: 14px;
    font-weight: 600;
    white-space: nowrap;
}

.meter {
    width: 60px;
    height: 15px;
    background:
        linear-gradient(90deg, #ff0000 30px, #400000 30px 31px, #00ff00 31px) 0 0 / 60px 7px no-repeat,
        repeating-linear-gradient(90deg, #00ff00 0 4px, transparent 4px 8px) 0 8px / 60px 7px no-repeat;
}

.cell {
    display: flex;
    align-items: center;
    justify-content: center;
    border-left: 1px solid #400090;
    font-size: 12px;
}

.pair {
    justify-content: flex-start;
    font-family: "Liberation Sans", sans-serif;
    color: #ff0000;
}

.clock {
    justify-content: flex-start;
    padding-left: 1px;
    font-size: 11px;
}

/* Taskbar */
.taskbar {
    display: flex;
    align-items: center;
    height: 27px;
    background: linear-gradient(#4088f0, #2460d8 4px, #2058d0 22px, #1c48b0);
    color: #fff;
}

.taskbar svg {
    width: 16px;
    height: 16px;
}

.start {
    display: flex;
    align-items: center;
    gap: 6px;
    width: 95px;
    height: 27px;
    padding-left: 8px;
    border-radius: 0 10px 10px 0;
    background: linear-gradient(#70b870, #3c9040 5px, #388838 20px, #286828);
    box-shadow: inset -4px 0 4px #286828;
    font-size: 18px;
    font-style: italic;
    line-height: 24px;
}

.taskbar .start svg {
    width: 20px;
    height: 19px;
}

.launch {
    display: flex;
    gap: 7px;
    padding-left: 11px;
}

.more {
    padding-left: 11px;
    font-size: 16px;
    line-height: 16px;
    color: #c0d8ff;
    align-self: flex-start;
}

.tasks {
    flex: 1;
    display: flex;
    gap: 2px;
    padding-left: 8px;
}

.tasks button {
    display: flex;
    align-items: center;
    gap: 5px;
    position: relative;
    width: 50px;
    height: 23px;
    padding-left: 9px;
    border-radius: 3px;
    background: linear-gradient(#68a0f8, #3c80f0 4px, #3878e8);
}

.tasks .current {
    background: linear-gradient(#1840a0, #2050b8);
}

.tasks .badge {
    position: absolute;
    left: 7px;
    top: 6px;
    width: 12px;
    height: 12px;
}

.spin {
    display: flex;
    flex-direction: column;
    gap: 1px;
}

.spin button {
    border: 1px solid #78a8f8;
    background-color: #2c68d8;
}

.taskbar .spin svg {
    width: 12px;
    height: 10px;
}

.keyboard {
    margin: 0 7px 0 15px;
}

.computer {
    color: #90c0ff;
}

.tray {
    display: flex;
    align-items: center;
    gap: 2px;
    height: 27px;
    margin-left: 14px;
    padding-right: 14px;
    border-left: 1px solid #104090;
    background: linear-gradient(#60c0f8, #1898e8 4px, #1490e0 22px, #1070c0);
}

.tray button {
    width: 18px;
    height: 18px;
    margin-left: -10px;
    border-radius: 9px;
    background-color: #48a8f8;
    font: bold 16px/15px "Liberation Sans", sans-serif;
}

.tray time {
    padding-left: 5px;
}
```
